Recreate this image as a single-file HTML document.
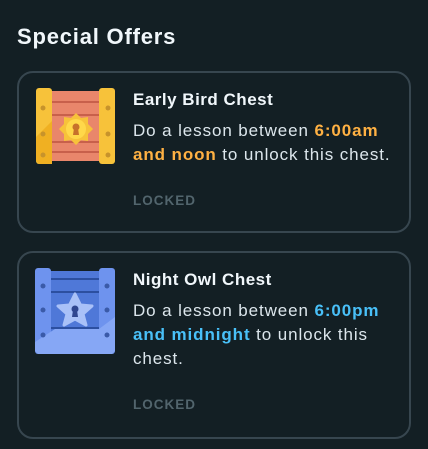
<!DOCTYPE html><html><head><style>
body{margin:0;width:428px;height:449px;background:#131f24;font-family:"Liberation Sans",sans-serif;position:relative;overflow:hidden;color:#f1f7fb}
h1{position:absolute;left:17px;top:24px;margin:0;font-size:22px;font-weight:bold;letter-spacing:0.8px}
.card{position:absolute;left:17px;width:390px;border:2px solid #37464f;border-radius:16px}
.t{position:absolute;left:114px;font-size:17px;font-weight:bold;letter-spacing:0.5px}
.b{position:absolute;left:114px;font-size:17px;line-height:24px;color:#dce6ec;width:262px;letter-spacing:0.9px}
.l{position:absolute;left:114px;font-size:13.5px;font-weight:bold;color:#52656d;letter-spacing:1px}
.o{color:#ffb143;font-weight:bold}.bl{color:#49c0f8;font-weight:bold}
svg{position:absolute}
</style></head><body>
<h1>Special Offers</h1>
<div class="card" style="top:71px;height:158px">
<svg style="left:17px;top:14px" width="79" height="78" viewBox="0 0 79 78">
<rect x="14" y="4" width="52" height="70" fill="#e9866b"/>
<g fill="#c8604b"><rect x="14" y="14" width="52" height="2"/><rect x="14" y="27" width="52" height="2"/><rect x="14" y="54" width="52" height="2"/><rect x="14" y="64" width="52" height="2"/></g>
<rect x="0" y="1" width="16" height="76" rx="3" fill="#f7c23a"/><rect x="63" y="1" width="16" height="76" rx="3" fill="#f7c23a"/>
<polygon points="0,50 16,34 16,77 3,77 0,74" fill="#f0b022"/>
<g fill="#c7932b"><circle cx="7" cy="21" r="2.5"/><circle cx="7" cy="47" r="2.5"/><circle cx="7" cy="68" r="2.5"/><circle cx="72" cy="21" r="2.5"/><circle cx="72" cy="47" r="2.5"/><circle cx="72" cy="68" r="2.5"/></g>
<polygon points="40,26 45,31 52,30 52,37 57,42 52,47 52,54 45,53 40,58 35,53 28,54 28,47 23,42 28,37 28,30 35,31" fill="#f7c23a"/>
<circle cx="40" cy="42" r="10" fill="#ffd84a"/>
<circle cx="40" cy="40" r="3.5" fill="#c7722b"/><polygon points="38,41 42,41 43,48 37,48" fill="#c7722b"/>
</svg>
<div class="t" style="top:17px">Early Bird Chest</div>
<div class="b" style="top:46px">Do a lesson between <span class="o">6:00am and noon</span> to unlock this chest.</div>
<div class="l" style="top:120px">LOCKED</div>
</div>
<div class="card" style="top:251px;height:184px">
<svg style="left:16px;top:14px" width="80" height="88" viewBox="0 0 80 88">
<rect x="14" y="4" width="52" height="78" fill="#4f78d8"/>
<g fill="#2c4fa0"><rect x="14" y="11" width="52" height="2"/><rect x="14" y="24" width="52" height="2"/><rect x="14" y="60" width="52" height="2"/><rect x="14" y="74" width="52" height="2"/></g>
<rect x="0" y="1" width="16" height="86" rx="3" fill="#6e93ee"/><rect x="64" y="1" width="16" height="86" rx="3" fill="#6e93ee"/>
<polygon points="0,75 20,62 64,62 80,50 80,84 77,87 3,87 0,84" fill="#86a7f5"/>
<g fill="#3a5aa8"><circle cx="8" cy="19" r="2.5"/><circle cx="8" cy="43" r="2.5"/><circle cx="8" cy="68" r="2.5"/><circle cx="72" cy="19" r="2.5"/><circle cx="72" cy="43" r="2.5"/><circle cx="72" cy="68" r="2.5"/></g>
<polygon points="40,27 45.5,38 57,39 48,47 51,58 40,52 29,58 32,47 23,39 34.5,38" fill="#a9c1f8" stroke="#a9c1f8" stroke-width="3" stroke-linejoin="round"/>
<circle cx="40" cy="42" r="3.5" fill="#2f4690"/><polygon points="38,43 42,43 43,50 37,50" fill="#2f4690"/>
</svg>
<div class="t" style="top:17px">Night Owl Chest</div>
<div class="b" style="top:46px">Do a lesson between <span class="bl">6:00pm and midnight</span> to unlock this chest.</div>
<div class="l" style="top:144px">LOCKED</div>
</div>
</body></html>
